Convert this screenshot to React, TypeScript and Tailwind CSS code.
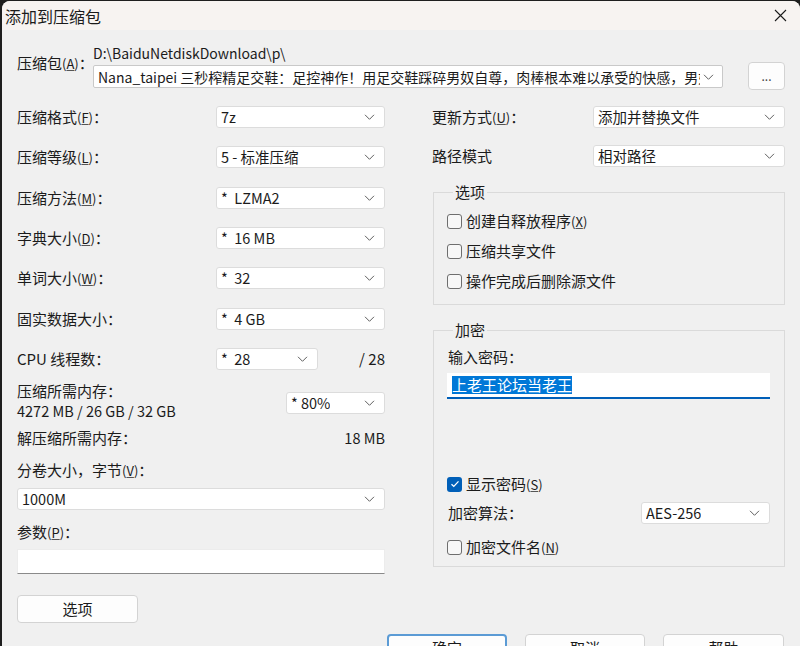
import React from "react";

const Chevron = () => (
  <svg width="11" height="6" viewBox="0 0 11 6" className="shrink-0">
    <path d="M1 0.8l4.5 4.5 4.5-4.5" fill="none" stroke="#5f5f5f" strokeWidth="1" />
  </svg>
);

function Combo({ value, className = "" }: { value: string; className?: string }) {
  return (
    <div
      className={`flex items-center justify-between h-[22px] bg-white border border-[#dcdcdc] rounded-[3px] pl-[4px] pr-[9px] shrink-0 text-[14.5px] ${className}`}
    >
      <span className="whitespace-pre overflow-hidden">{value}</span>
      <Chevron />
    </div>
  );
}

function Key({ k }: { k: string }) {
  return (
    <span className="text-[13px]">
      (<span className="underline underline-offset-1 decoration-[#555]">{k}</span>)
    </span>
  );
}

function Check({ checked = false, children }: { checked?: boolean; children: React.ReactNode }) {
  return (
    <div className="flex items-center h-[20px]">
      {checked ? (
        <div className="w-[15px] h-[15px] rounded-[3px] bg-[#005fb8] flex items-center justify-center">
          <svg width="10" height="8" viewBox="0 0 10 8">
            <path d="M1.5 4.2l2.3 2.2 4.7-5" fill="none" stroke="white" strokeWidth="1.3" />
          </svg>
        </div>
      ) : (
        <div className="w-[15px] h-[15px] rounded-[3px] border border-[#6e6e6e] bg-[#f7f7f7]" />
      )}
      <span className="ml-[4px] whitespace-nowrap">{children}</span>
    </div>
  );
}

function Button({ label, primary = false, className = "" }: { label: string; primary?: boolean; className?: string }) {
  return (
    <div
      className={`h-[28px] rounded-[4px] bg-[#fdfdfd] flex items-center justify-center shrink-0 ${
        primary ? "border-2 border-[#5b9bd5]" : "border border-[#d3d3d3]"
      } ${className}`}
    >
      {label}
    </div>
  );
}

function Row({ label, value, className = "" }: { label: React.ReactNode; value: string; className?: string }) {
  return (
    <div className={`flex items-center justify-between h-[22px] ${className}`}>
      <span className="whitespace-nowrap">{label}</span>
      <Combo value={value} className="w-[169px]" />
    </div>
  );
}

export default function App() {
  return (
    <div className="w-[800px] h-[646px] bg-[#1e1e1e] overflow-hidden font-['Noto_Sans_CJK_SC',sans-serif] text-[15px] text-[#1b1b1b] leading-[20px]">
      <div className="ml-[2px] mt-[1px] h-full rounded-t-[8px] bg-[#f0f0f0] overflow-hidden">
        {/* title bar */}
        <div className="h-[29px] bg-[#f7f3f1] flex items-center justify-between pl-[3px] pr-[13px]">
          <span className="text-[16px]">添加到压缩包</span>
          <svg width="13" height="13" viewBox="0 0 13 13">
            <path d="M1 1l11 11M12 1L1 12" stroke="#1b1b1b" strokeWidth="1.1" />
          </svg>
        </div>

        <div className="pl-[15px] pr-[15px]">
          {/* archive */}
          <div className="flex items-start h-[58px] mt-[14px]">
            <div className="w-[76px] mt-[9px] whitespace-nowrap">
              压缩包<Key k="A" />：
            </div>
            <div className="flex flex-col">
              <span className="text-[14px] leading-[18px]">D:\BaiduNetdiskDownload\p\</span>
              <div className="mt-[3px] w-[630px] h-[23px] bg-white border border-[#c9c9c9] rounded-[2px] flex items-center justify-between pl-[4px] pr-[8px]">
                <span className="whitespace-nowrap overflow-hidden w-[602px] text-[14px]">
                  Nana_taipei 三秒榨精足交鞋：足控神作！用足交鞋踩碎男奴自尊，肉棒根本难以承受的快感，男奴彻底沦陷
                </span>
                <Chevron />
              </div>
            </div>
            <Button label="..." className="ml-[25px] mt-[18px] w-[37px] text-[12px] text-[#444]" />
          </div>

          <div className="flex mt-[4px]">
            {/* left column */}
            <div className="w-[368px] flex flex-col">
              <Row label={<>压缩格式<Key k="F" />：</>} value="7z" />
              <Row label={<>压缩等级<Key k="L" />：</>} value="5 - 标准压缩" className="mt-[18px]" />
              <Row label={<>压缩方法<Key k="M" />：</>} value="*  LZMA2" className="mt-[19px]" />
              <Row label={<>字典大小<Key k="D" />：</>} value="*  16 MB" className="mt-[18px]" />
              <Row label={<>单词大小<Key k="W" />：</>} value="*  32" className="mt-[18px]" />
              <Row label="固实数据大小：" value="*  4 GB" className="mt-[19px]" />
              <div className="flex items-center h-[22px] mt-[18px]">
                <span className="w-[199px]">CPU 线程数：</span>
                <Combo value="*  28" className="w-[102px]" />
                <span className="ml-auto">/ 28</span>
              </div>
              <div className="flex items-start mt-[11px]">
                <div className="flex flex-col flex-1">
                  <span>压缩所需内存：</span>
                  <span className="text-[14.5px]">4272 MB / 26 GB / 32 GB</span>
                </div>
                <Combo value="* 80%" className="w-[99px] mt-[11px]" />
              </div>
              <div className="flex justify-between mt-[7px]">
                <span>解压缩所需内存：</span>
                <span className="text-[14.5px]">18 MB</span>
              </div>
              <span className="mt-[12px]">
                分卷大小，字节<Key k="V" />：
              </span>
              <Combo value="1000M" className="mt-[7px] w-full" />
              <span className="mt-[12px]">
                参数<Key k="P" />：
              </span>
              <div className="mt-[6px] h-[25px] bg-white border border-[#ececec] border-b-[#8a8a8a]" />
              <Button label="选项" className="mt-[21px] w-[121px]" />
            </div>

            {/* right column */}
            <div className="ml-[47px] w-[353px] flex flex-col">
              <div className="flex items-center justify-between h-[22px]">
                <span>
                  更新方式<Key k="U" />：
                </span>
                <Combo value="添加并替换文件" className="w-[192px]" />
              </div>
              <div className="flex items-center justify-between h-[22px] mt-[17px]">
                <span>路径模式</span>
                <Combo value="相对路径" className="w-[192px]" />
              </div>

              <fieldset className="mt-[16px] ml-[1px] border border-[#dadada] pl-[13px] pb-[13px]">
                <legend className="ml-[6px] px-[2px] leading-[18px]">选项</legend>
                <div className="flex flex-col mt-[10px] gap-[10px]">
                  <Check>
                    创建自释放程序<Key k="X" />
                  </Check>
                  <Check>压缩共享文件</Check>
                  <Check>操作完成后删除源文件</Check>
                </div>
              </fieldset>

              <fieldset className="mt-[16px] ml-[1px] border border-[#dadada] pl-[13px] pb-[9px]">
                <legend className="ml-[6px] px-[2px] leading-[18px]">加密</legend>
                <span className="block mt-[8px] ml-[1px]">输入密码：</span>
                <div className="mt-[6px] w-[323px] h-[26px] bg-white border-b-2 border-[#005fb8] flex items-center pl-[5px]">
                  <span className="bg-[#0078d7] text-white leading-[18px]">上老王论坛当老王</span>
                </div>
                <div className="mt-[75px]">
                  <Check checked>
                    显示密码<Key k="S" />
                  </Check>
                </div>
                <div className="flex items-center justify-between h-[22px] mt-[8px] ml-[1px] w-[322px]">
                  <span>加密算法：</span>
                  <Combo value="AES-256" className="w-[129px]" />
                </div>
                <div className="mt-[13px]">
                  <Check>
                    加密文件名<Key k="N" />
                  </Check>
                </div>
              </fieldset>
            </div>
          </div>

          {/* bottom buttons */}
          <div className="flex justify-end gap-[18px] mt-[11px] pr-[1px]">
            <Button label="确定" primary className="w-[120px]" />
            <Button label="取消" className="w-[120px]" />
            <Button label="帮助" className="w-[121px]" />
          </div>
        </div>
      </div>
    </div>
  );
}
